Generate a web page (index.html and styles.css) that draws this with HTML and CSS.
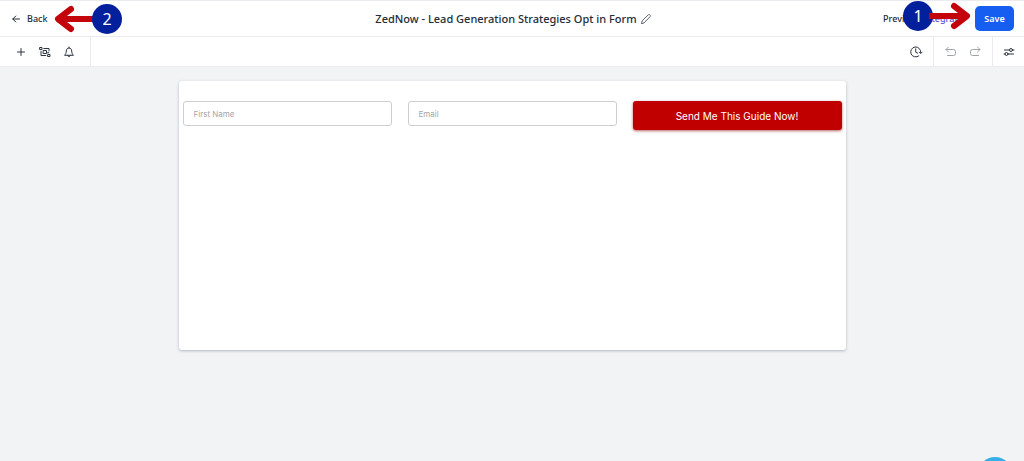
FILE: index.html
```html
<!DOCTYPE html>
<html lang="en">
<head>
    <meta charset="UTF-8">
    <meta name="viewport" content="width=device-width, initial-scale=1.0">
    <title>ZedNow - Form Builder</title>
    <link rel="stylesheet" href="styles.css">
</head>
<body>
    <!-- Header -->
    <header class="header">
        <div class="header-left">
            <a class="back" href="#">
                <svg width="8" height="8" viewBox="0 0 8 8"><path d="M7.5 4H.8M3.800 1L.8 4l3 3"/></svg>
                Back
            </a>
            <!-- Step 2 -->
            <div class="step step-back">
                <svg width="42" height="30" viewBox="0 0 42 30"><path d="M42 15H6M17 5L4 15l13 10"/></svg>
                <span class="step-number">2</span>
            </div>
        </div>
        <div class="title">
            <h1>ZedNow - Lead Generation Strategies Opt in Form</h1>
            <svg width="10" height="10" viewBox="0 0 10 10"><path d="M.6 9.400l.6-2.600L7.200.9c.5-.5 1.300-.4 1.800 0s.5 1.300 0 1.800L3.200 8.700z"/></svg>
        </div>
        <div class="header-right">
            <a class="link" href="#">Preview</a>
            <a class="link link-accent" href="#">Integrate</a>
            <button class="save" type="button">Save</button>
            <!-- Step 1 -->
            <div class="step step-save">
                <span class="step-number">1</span>
                <svg width="42" height="30" viewBox="0 0 42 30"><path d="M0 15h36M25 5l13 10-13 10"/></svg>
            </div>
        </div>
    </header>

    <!-- Toolbar -->
    <div class="toolbar">
        <div class="tools tools-left">
            <button type="button" aria-label="Add">
                <svg width="12" height="12" viewBox="0 0 12 12"><path d="M6 2.500v7M2.500 6h7"/></svg>
            </button>
            <button type="button" aria-label="Workflow">
                <svg width="12" height="12" viewBox="0 0 12 12"><path d="M1 1.500h2v2H1zM9 8.500h2v2H9zM4.800 2.500H10v2.200M2 5.200v4.300h4.800M4.500 4.500h3v3h-3zM9.700 6.200v.6H8.500"/></svg>
            </button>
            <button type="button" aria-label="Notifications">
                <svg width="12" height="12" viewBox="0 0 12 12"><path d="M1.800 9C2.900 7.800 3.200 7 3.300 5 3.400 3 4.500 2 6 2s2.600 1 2.700 3c.1 2 .4 2.800 1.500 4zM6 1v1M4.700 9.300c0 2 2.600 2 2.600 0"/></svg>
            </button>
        </div>
        <div class="tools tools-history">
            <button type="button" aria-label="Version history">
                <svg width="14" height="14" viewBox="0 0 14 14"><path d="M9.800 10.900A5 5 0 1 1 11.700 7.500M6.700 3.800v3.400l2 1M10.300 7.200l1.400 1.400L13 7.200"/></svg>
            </button>
        </div>
        <div class="tools tools-undo">
            <button type="button" aria-label="Undo">
                <svg width="12" height="12" viewBox="0 0 12 12"><path d="M3.500 1L1 3.500 3.500 6M1 3.500h7.500a2 2 0 0 1 2 2v2a2 2 0 0 1-2 2H2.500"/></svg>
            </button>
            <button type="button" aria-label="Redo">
                <svg width="12" height="12" viewBox="0 0 12 12"><path d="M8.500 1L11 3.500 8.500 6M11 3.500H3.500a2 2 0 0 0-2 2v2a2 2 0 0 0 2 2h6"/></svg>
            </button>
        </div>
        <div class="tools tools-settings">
            <button type="button" aria-label="Settings">
                <svg width="12" height="12" viewBox="0 0 12 12"><path d="M1.500 4h5M9.500 4H11M1 8h1M5 8h5.500"/><circle cx="8" cy="4" r="1.500"/><circle cx="3.500" cy="8" r="1.500"/></svg>
            </button>
        </div>
    </div>

    <!-- Canvas -->
    <main class="workspace">
        <form class="form-card">
            <input type="text" aria-label="First Name" placeholder="First Name">
            <input type="email" aria-label="Email" placeholder="Email">
            <button class="submit" type="submit">Send Me This Guide Now!</button>
        </form>
    </main>

    <button class="chat" type="button" aria-label="Open chat"></button>
</body>
</html>
```
FILE: styles.css
```css
* {
    box-sizing: border-box;
}
body {
    margin: 0;
    min-height: 100vh;
    display: flex;
    flex-direction: column;
    overflow: hidden;
    background: #f1f3f5;
    color: #242c38;
    font-family: "Noto Sans", "Open Sans", sans-serif;
    font-size: 9px;
}
svg {
    display: block;
    fill: none;
    stroke: currentColor;
    stroke-linecap: round;
    stroke-linejoin: round;
}
button {
    font-family: inherit;
    border: none;
    padding: 0;
    cursor: pointer;
}
a {
    color: inherit;
    text-decoration: none;
}

/* Header */
.header {
    display: grid;
    grid-template-columns: 1fr auto 1fr;
    align-items: center;
    height: 37px;
    padding: 0 10px 0 12px;
    background: #fff;
    border-top: 1px solid #e9ebee;
    border-bottom: 1px solid #e9ebee;
}
.header-left,
.header-right {
    position: relative;
    display: flex;
    align-items: center;
}
.header-right {
    justify-content: flex-end;
    gap: 6px;
}
.back {
    display: flex;
    align-items: center;
    gap: 7px;
    font-weight: 500;
}
.title {
    display: flex;
    align-items: center;
    gap: 4px;
}
.title h1 {
    margin: 0;
    font-size: 11px;
    font-weight: 500;
}
.title svg {
    color: #5b6370;
}
.link {
    font-weight: 500;
}
.link-accent {
    margin-right: 6px;
    color: #5a50d8;
}
.save {
    width: 39px;
    height: 25px;
    border-radius: 5px;
    background: #155eef;
    color: #fff;
    font-size: 9px;
    font-weight: 600;
}

/* Numbered steps */
.step {
    position: absolute;
    display: flex;
    align-items: center;
}
.step svg {
    color: #c4040b;
    stroke-width: 6;
}
.step-number {
    width: 30px;
    height: 30px;
    border-radius: 50%;
    background: #03209c;
    color: #fff;
    font-size: 16px;
    line-height: 30px;
    text-align: center;
}
.step-back {
    left: 42px;
}
.step-back svg {
    margin-right: -4px;
}
.step-save {
    right: 43px;
    bottom: 0;
}
.step-save svg {
    margin-left: -4px;
}

/* Toolbar */
.toolbar {
    display: flex;
    height: 30px;
    background: #fff;
    border-bottom: 1px solid #e9ebee;
}
.tools {
    display: flex;
    align-items: center;
    gap: 12px;
}
.tools button {
    background: none;
    color: #2d3541;
}
.tools-left {
    padding: 0 15px;
    border-right: 1px solid #e9ebee;
}
.tools-history {
    margin-left: auto;
    padding: 0 10px;
}
.tools-undo,
.tools-settings {
    padding: 0 11px;
    border-left: 1px solid #e9ebee;
}
.tools-settings {
    padding: 0 9px 0 10px;
}
.tools-undo button {
    color: #9ea3aa;
}

/* Canvas */
.workspace {
    padding: 14px 16px;
}
.form-card {
    display: grid;
    grid-template-columns: repeat(3, 1fr);
    gap: 16px;
    align-items: start;
    max-width: 667px;
    min-height: 269px;
    margin: 0 auto;
    padding: 20px 4px;
    background: #fff;
    border-radius: 3px;
    box-shadow: 0 1px 3px rgba(30, 45, 75, 0.3);
}
.form-card input {
    width: 100%;
    height: 25px;
    padding: 0 10px;
    border: 1px solid #ccced1;
    border-radius: 3px;
    font-family: Inter, sans-serif;
    font-size: 8px;
}
.form-card input::placeholder {
    color: #a5a5a5;
}
.submit {
    height: 29px;
    border-radius: 3px;
    background: #c00000;
    box-shadow: 0 1px 3px rgba(130, 0, 0, 0.6);
    color: #fff;
    font-family: Inter, sans-serif;
    font-size: 10px;
}

/* Chat launcher */
.chat {
    position: fixed;
    right: 12px;
    bottom: -30px;
    width: 34px;
    height: 34px;
    border-radius: 50%;
    background: #36aee8;
}
```
